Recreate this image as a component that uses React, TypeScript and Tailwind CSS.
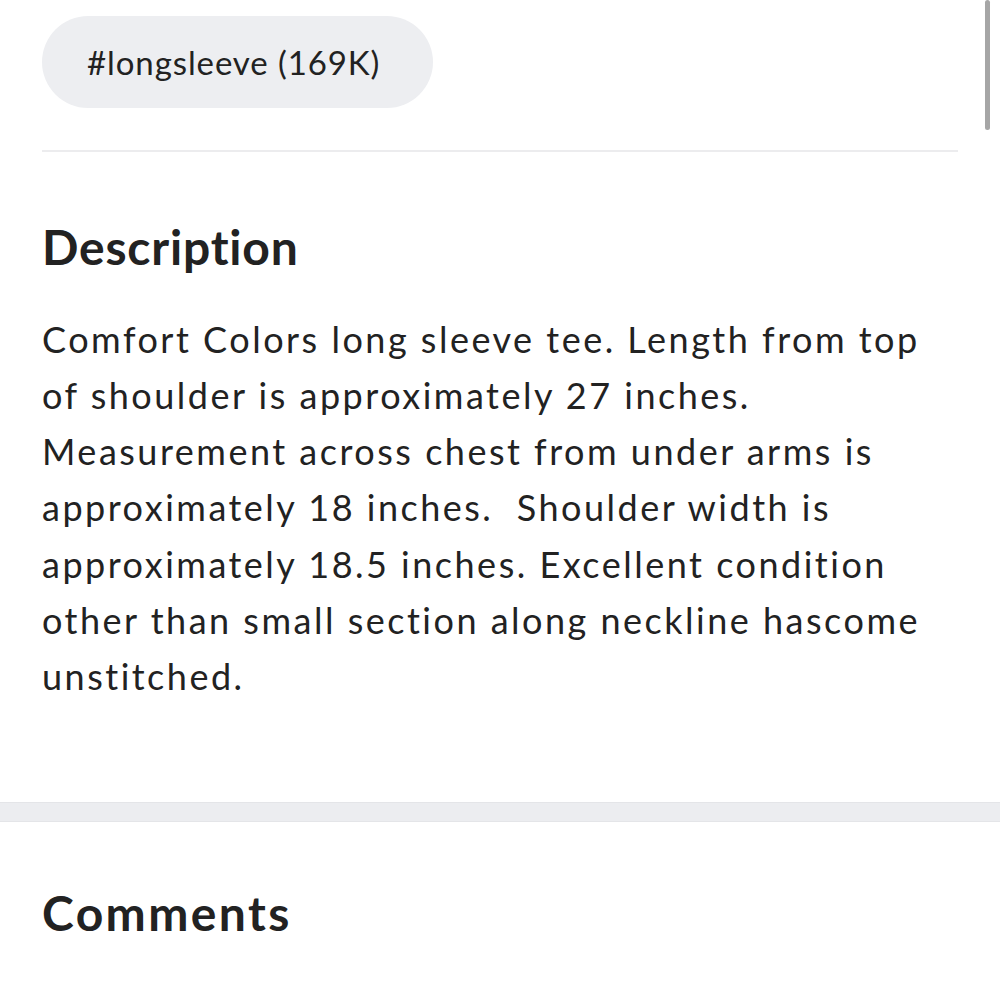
const lines = [
  "Comfort Colors long sleeve tee. Length from top",
  "of shoulder is approximately 27 inches.",
  "Measurement across chest from under arms is",
  "approximately 18 inches.\u00a0 Shoulder width is",
  "approximately 18.5 inches. Excellent condition",
  "other than small section along neckline hascome",
  "unstitched.",
];

export default function App() {
  return (
    <div className="relative min-h-[1000px] overflow-hidden bg-white text-[#222222] [font-family:Lato,'Noto_Sans',sans-serif] [font-variant-ligatures:none]">
      {/* scroll indicator */}
      <div className="absolute right-[10px] top-0 h-[130px] w-[5px] rounded-full bg-[#a6a6a6]" />

      <div className="px-[42px] pt-[16px]">
        <div className="flex h-[92px] w-[391px] items-center rounded-full bg-[#edeef1] pl-[45px] text-[33px] leading-none tracking-[0.9px]">
          #longsleeve (169K)
        </div>
        <div className="mt-[42px] h-[2px] bg-[#ececee]" />

        <h2 className="mt-[66px] text-[48px] font-bold leading-[1.2] tracking-[0.8px]">Description</h2>
        <p className="mt-[35px] text-[36px] leading-[56.3px] tracking-[2.5px]">
          {lines.map((l) => (
            <span key={l} className="block whitespace-pre">
              {l}
            </span>
          ))}
        </p>
      </div>

      <div className="mt-[97px] h-[20px] border-y border-[#e4e5e8] bg-[#ecedf0]" />

      <div className="px-[42px]">
        <h2 className="mt-[62px] text-[48px] font-bold leading-[1.2] tracking-[2.4px]">Comments</h2>
      </div>
    </div>
  );
}
